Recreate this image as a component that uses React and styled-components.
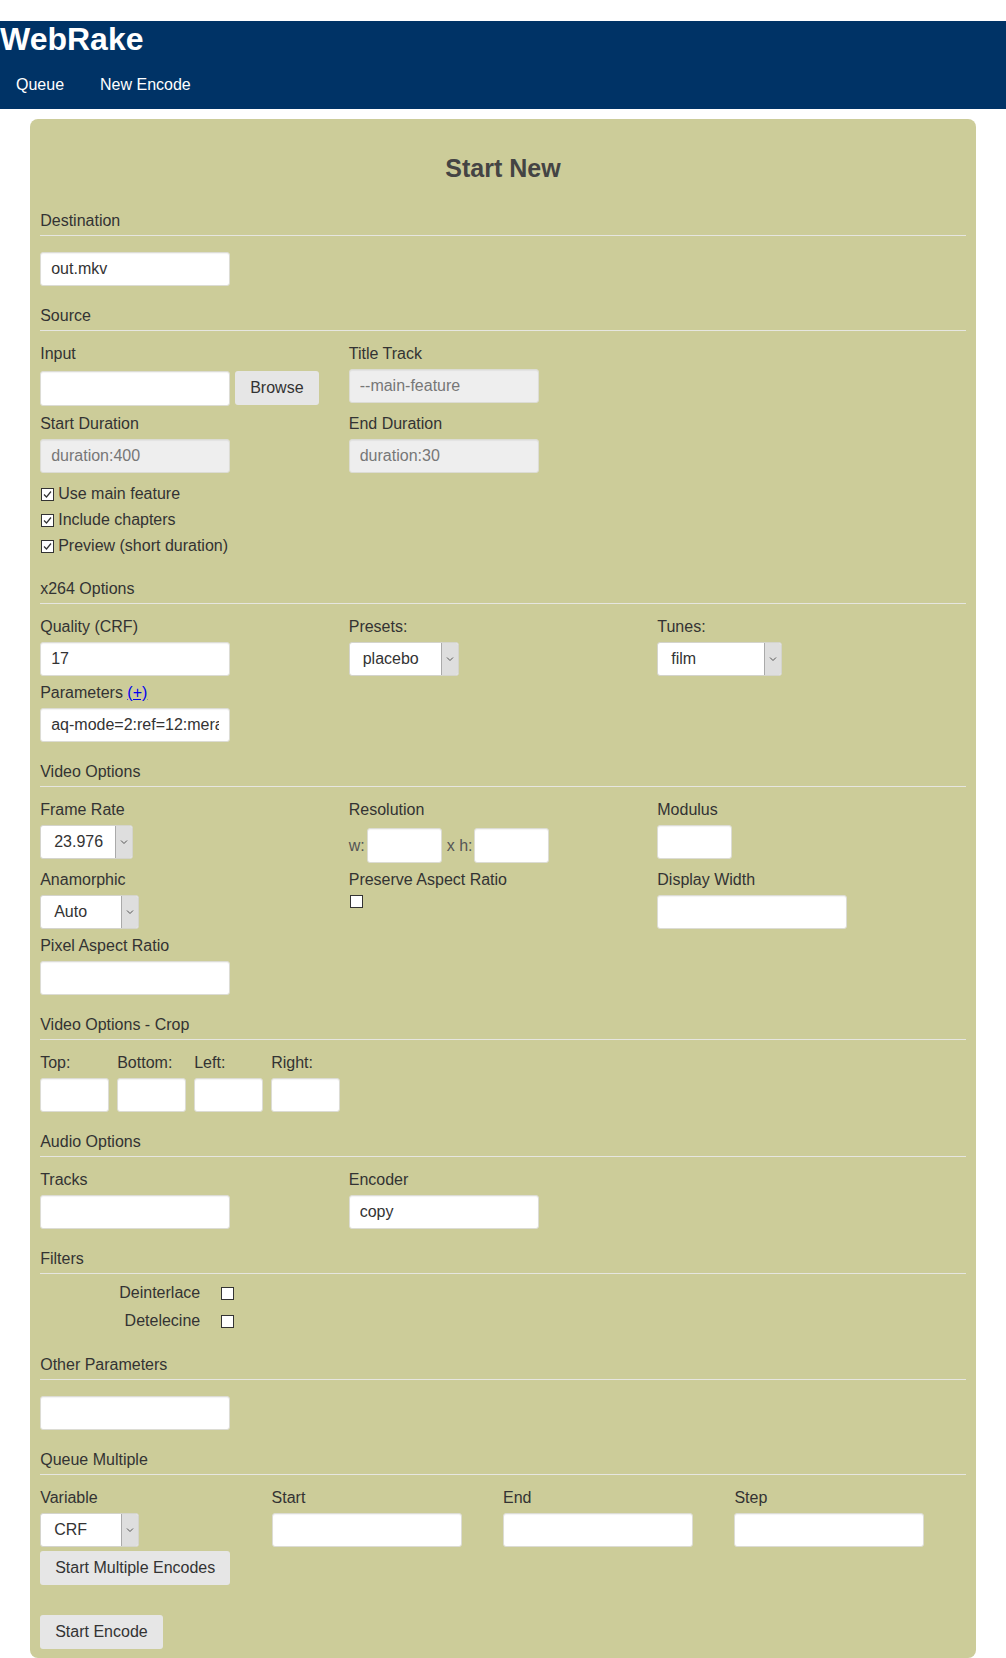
import React from 'react';
import styled, { createGlobalStyle } from 'styled-components';

const GlobalStyle = createGlobalStyle`
  body {
    margin: 0;
    background: #fff;
    font-family: "Liberation Sans", Arial, sans-serif;
    font-size: 16px;
    color: #333;
  }
`;

const Header = styled.header`
  margin-top: 21px;
  background-color: #003366;
  color: white;
`;

const SiteTitle = styled.h1`
  margin: 0;
  font-size: 32px;
  line-height: 37px;
  font-weight: bold;
`;

const Nav = styled.nav`
  display: flex;
  gap: 4px;
  padding: 18px 0 15px;
  line-height: 18px;
`;

const NavLink = styled.a`
  color: white;
  text-decoration: none;
  padding: 0 16px;
`;

const Panel = styled.div`
  width: 94%;
  margin: 10px auto 0;
  box-sizing: border-box;
  background-color: #cccc99;
  border-radius: 8px;
  padding: 10px 10px 9px;
`;

const Title = styled.h2`
  text-align: center;
  color: #444;
  font-size: 25px;
  line-height: 29px;
  margin: 25px 0 29px;
`;

const SectionHeader = styled.div`
  margin: 21px 0 14px;
  line-height: 18px;
  padding-bottom: 5px;
  border-bottom: 1px solid #e6e6e0;
`;

const Row = styled.div`
  display: grid;
  grid-template-columns: repeat(${p => p.$cols || 3}, 1fr);
  row-gap: ${p => p.$gap || 8}px;
  align-items: start;
`;

const Field = styled.div`
  display: flex;
  flex-direction: column;
  align-items: flex-start;
`;

const Label = styled.label`
  display: block;
  line-height: 18px;
  margin-bottom: 6px;
`;

const PlusLink = styled.a`
  color: #0000ee;
  text-decoration: underline;
`;

const TextInput = styled.input`
  width: ${p => p.$w || 190}px;
  height: ${p => p.$h || 34}px;
  box-sizing: border-box;
  padding: 0 10px;
  margin: ${p => p.$mt || 0}px 0 0;
  font-family: "Liberation Sans", Arial, sans-serif;
  font-size: 16px;
  color: ${p => (p.$muted ? '#777' : '#333')};
  background: ${p => (p.$muted ? '#eeeeee' : '#ffffff')};
  border: 1px solid #dcdcd4;
  border-radius: 3px;
  box-shadow: inset 0 1px 1px rgba(0, 0, 0, 0.05);
  outline: none;
`;

const InputGroup = styled.div`
  display: flex;
  align-items: flex-start;
  gap: 5px;
  padding-top: ${p => p.$pt || 0}px;
`;

const Button = styled.button`
  height: ${p => p.$h || 34}px;
  padding: 0 15px;
  background: #e6e6e6;
  border: none;
  border-radius: 3px;
  font-family: "Liberation Sans", Arial, sans-serif;
  font-size: 16px;
  color: #333;
  margin-top: ${p => p.$mt || 0}px;
`;

const ButtonStack = styled.div`
  display: flex;
  flex-direction: column;
  align-items: flex-start;
`;

const SelectBox = styled.div`
  display: inline-flex;
  width: ${p => p.$w}px;
  height: 34px;
  box-sizing: border-box;
  border: 1px solid #d4d4cc;
  border-radius: 3px;
  background: #fff;
  overflow: hidden;
`;

const SelectValue = styled.span`
  flex: 1;
  padding-left: 13px;
  line-height: 32px;
  color: #333;
  white-space: nowrap;
`;

const SelectArrow = styled.span`
  width: 16px;
  background: #dedede;
  border-left: 1px solid #aaa;
  display: flex;
  align-items: center;
  justify-content: center;
`;

const CheckList = styled.div`
  display: flex;
  flex-direction: column;
  margin-top: 8px;
`;

const CheckRow = styled.div`
  display: flex;
  align-items: center;
  gap: 4px;
  height: 26px;
`;

const Box = styled.span`
  display: inline-flex;
  align-items: center;
  justify-content: center;
  width: 13px;
  height: 13px;
  box-sizing: border-box;
  border: 1px solid #333;
  background: #fff;
  margin-left: 1px;
`;

const Resolution = styled.div`
  display: flex;
  align-items: center;
  padding-top: 3px;
  color: #555;
`;

const ResText = styled.span`
  margin: ${p => p.$m || '0'};
`;

const CropRow = styled.div`
  display: flex;
  gap: 8px;
`;

const FilterGrid = styled.div`
  display: grid;
  grid-template-columns: 160px auto;
  column-gap: 20px;
  row-gap: 14px;
  margin-top: -2px;
  padding-bottom: 7px;
  justify-content: start;
  align-items: center;
`;

const FilterLabel = styled.span`
  text-align: right;
  line-height: 14px;
`;

const Chevron = () => (
  <svg width="8" height="6" viewBox="0 0 8 6">
    <polyline points="1,1.5 4,4.5 7,1.5" fill="none" stroke="#555" strokeWidth="1" />
  </svg>
);

const Select = ({ value, w }) => (
  <SelectBox $w={w}>
    <SelectValue>{value}</SelectValue>
    <SelectArrow><Chevron /></SelectArrow>
  </SelectBox>
);

const Checkbox = ({ checked }) => (
  <Box>
    {checked && (
      <svg width="9" height="9" viewBox="0 0 9 9">
        <polyline points="1,4.5 3.5,7 8,1.5" fill="none" stroke="#333" strokeWidth="1.2" />
      </svg>
    )}
  </Box>
);

const TextField = ({ label, ...rest }) => (
  <Field>
    <Label>{label}</Label>
    <TextInput readOnly {...rest} />
  </Field>
);

const App = () => {
  return (
    <>
      <GlobalStyle />
      <Header>
        <SiteTitle>WebRake</SiteTitle>
        <Nav>
          <NavLink href="#">Queue</NavLink>
          <NavLink href="#">New Encode</NavLink>
        </Nav>
      </Header>

      <Panel>
        <Title>Start New</Title>

        <SectionHeader>Destination</SectionHeader>
        <TextInput readOnly defaultValue="out.mkv" $mt={2} />

        <SectionHeader>Source</SectionHeader>
        <Row $gap={9}>
          <Field>
            <Label>Input</Label>
            <InputGroup $pt={2}>
              <TextInput readOnly $h={35} />
              <Button type="button">Browse</Button>
            </InputGroup>
          </Field>
          <TextField label="Title Track" defaultValue="--main-feature" $muted />
          <div />
          <TextField label="Start Duration" defaultValue="duration:400" $muted />
          <TextField label="End Duration" defaultValue="duration:30" $muted />
        </Row>
        <CheckList>
          <CheckRow><Checkbox checked />Use main feature</CheckRow>
          <CheckRow><Checkbox checked />Include chapters</CheckRow>
          <CheckRow><Checkbox checked />Preview (short duration)</CheckRow>
        </CheckList>

        <SectionHeader>x264 Options</SectionHeader>
        <Row>
          <TextField label="Quality (CRF)" defaultValue="17" />
          <Field>
            <Label>Presets:</Label>
            <Select value="placebo" w={110} />
          </Field>
          <Field>
            <Label>Tunes:</Label>
            <Select value="film" w={125} />
          </Field>
          <Field>
            <Label>Parameters <PlusLink href="#">(+)</PlusLink></Label>
            <TextInput readOnly defaultValue="aq-mode=2:ref=12:merange=24:me=umh:subme=10" />
          </Field>
        </Row>

        <SectionHeader>Video Options</SectionHeader>
        <Row>
          <Field>
            <Label>Frame Rate</Label>
            <Select value="23.976" w={93} />
          </Field>
          <Field>
            <Label>Resolution</Label>
            <Resolution>
              <ResText $m="0 2px 0 0">w:</ResText>
              <TextInput readOnly $w={75} $h={35} />
              <ResText $m="0 1px 0 5px">x h:</ResText>
              <TextInput readOnly $w={75} $h={35} />
            </Resolution>
          </Field>
          <TextField label="Modulus" $w={75} />
          <Field>
            <Label>Anamorphic</Label>
            <Select value="Auto" w={99} />
          </Field>
          <Field>
            <Label>Preserve Aspect Ratio</Label>
            <Checkbox />
          </Field>
          <TextField label="Display Width" />
          <TextField label="Pixel Aspect Ratio" />
        </Row>

        <SectionHeader>Video Options - Crop</SectionHeader>
        <CropRow>
          <TextField label="Top:" $w={69} />
          <TextField label="Bottom:" $w={69} />
          <TextField label="Left:" $w={69} />
          <TextField label="Right:" $w={69} />
        </CropRow>

        <SectionHeader>Audio Options</SectionHeader>
        <Row>
          <TextField label="Tracks" />
          <TextField label="Encoder" defaultValue="copy" />
        </Row>

        <SectionHeader>Filters</SectionHeader>
        <FilterGrid>
          <FilterLabel>Deinterlace</FilterLabel>
          <Checkbox />
          <FilterLabel>Detelecine</FilterLabel>
          <Checkbox />
        </FilterGrid>

        <SectionHeader>Other Parameters</SectionHeader>
        <TextInput readOnly $mt={2} />

        <SectionHeader>Queue Multiple</SectionHeader>
        <Row $cols={4}>
          <Field>
            <Label>Variable</Label>
            <Select value="CRF" w={99} />
          </Field>
          <TextField label="Start" />
          <TextField label="End" />
          <TextField label="Step" />
        </Row>
        <ButtonStack>
          <Button type="button" $mt={4}>Start Multiple Encodes</Button>
          <Button type="button" $mt={30}>Start Encode</Button>
        </ButtonStack>
      </Panel>
    </>
  );
};

export default App;
